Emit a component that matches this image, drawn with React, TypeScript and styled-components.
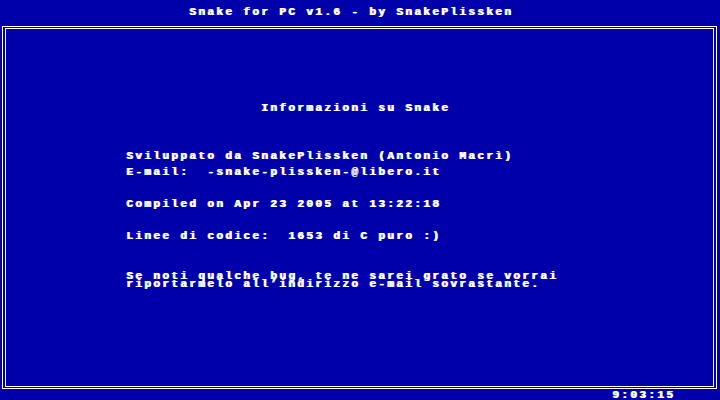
import React from "react";
import styled, { createGlobalStyle } from "styled-components";

const Global = createGlobalStyle`
  html, body { margin: 0; padding: 0; background: #0000aa; }
  body { width: 720px; height: 400px; overflow: hidden; }
`;

const Screen = styled.div`
  width: 720px;
  height: 400px;
  background: #0000aa;
  color: #ffffff;
  font-family: "Liberation Mono", "DejaVu Sans Mono", monospace;
  font-weight: bold;
  font-size: 11px;
  letter-spacing: 2.4px;
  text-shadow: 1px 0 0 #ffffff;
  display: flex;
  flex-direction: column;
  overflow: hidden;
`;

const Line = styled.div<{ $indent: number; $top?: number }>`
  height: 8px;
  line-height: 8px;
  white-space: pre;
  padding-left: ${(p) => p.$indent}px;
  margin-top: ${(p) => p.$top ?? 0}px;
  flex: none;
`;

const OuterFrame = styled.div`
  box-sizing: border-box;
  margin: 10px 0 0 2px;
  width: 715px;
  height: 363px;
  border: 1px solid #ffffff;
  padding: 1px 2px;
  display: flex;
  flex: none;
`;

const InnerFrame = styled.div`
  flex: 1;
  border: 1px solid #ffffff;
  display: flex;
  flex-direction: column;
`;

export default function App() {
  return (
    <>
      <Global />
      <Screen>
        <Line $indent={189} $top={8}>Snake for PC v1.6 - by SnakePlissken</Line>
        <OuterFrame>
          <InnerFrame>
            <Line $indent={255} $top={75}>Informazioni su Snake</Line>
            <Line $indent={120} $top={40}>Sviluppato da SnakePlissken (Antonio Macrì)</Line>
            <Line $indent={120} $top={8}>E-mail:  -snake-plissken-@libero.it</Line>
            <Line $indent={120} $top={24}>Compiled on Apr 23 2005 at 13:22:18</Line>
            <Line $indent={120} $top={24}>Linee di codice:  1653 di C puro :)</Line>
            <Line $indent={120} $top={32}>Se noti qualche bug, te ne sarei grato se vorrai</Line>
            <Line $indent={120}>riportarmelo all’indirizzo e-mail sovrastante.</Line>
          </InnerFrame>
        </OuterFrame>
        <Line $indent={612} $top={2}>9:03:15</Line>
      </Screen>
    </>
  );
}
